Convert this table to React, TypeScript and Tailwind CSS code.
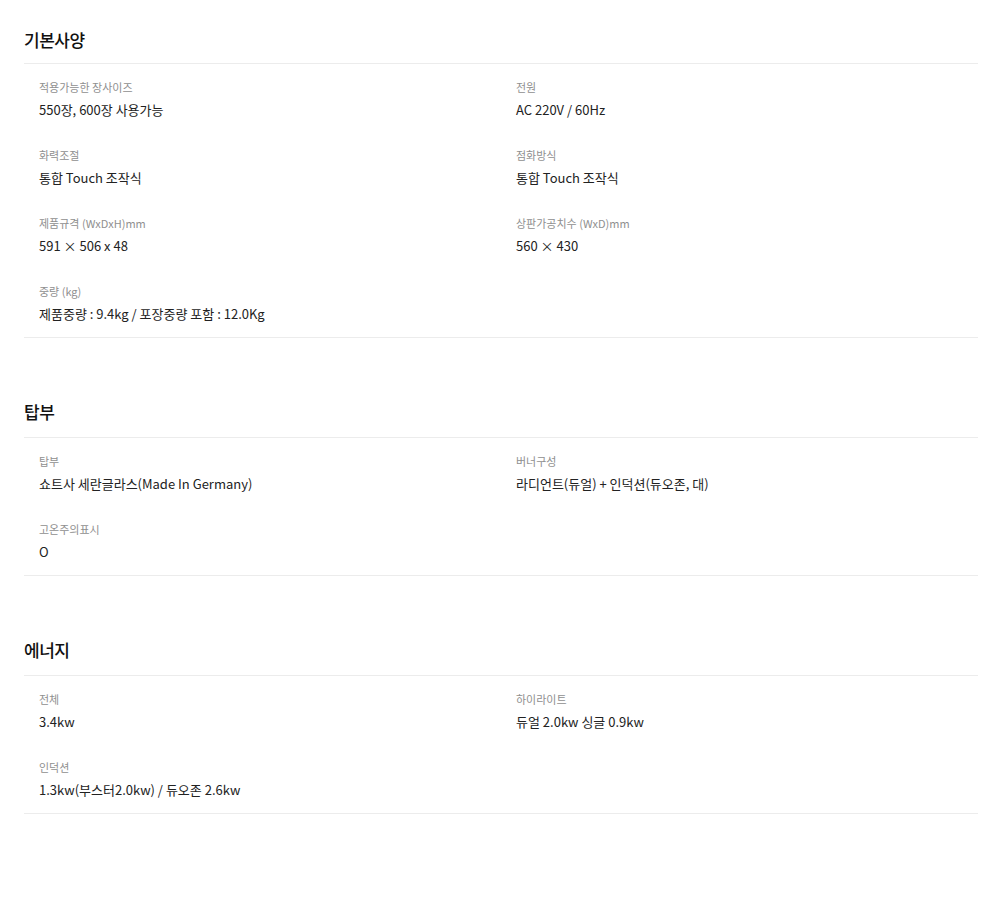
import React from "react";

type Item = { label: string; value: string };
type Section = { title: string; items: Item[] };

const sections: Section[] = [
  {
    title: "기본사양",
    items: [
      { label: "적용가능한 장사이즈", value: "550장, 600장 사용가능" },
      { label: "전원", value: "AC 220V / 60Hz" },
      { label: "화력조절", value: "통합 Touch 조작식" },
      { label: "점화방식", value: "통합 Touch 조작식" },
      { label: "제품규격 (WxDxH)mm", value: "591 × 506 x 48" },
      { label: "상판가공치수 (WxD)mm", value: "560 × 430" },
      { label: "중량 (kg)", value: "제품중량 : 9.4kg / 포장중량 포함 : 12.0Kg" },
    ],
  },
  {
    title: "탑부",
    items: [
      { label: "탑부", value: "쇼트사 세란글라스(Made In Germany)" },
      { label: "버너구성", value: "라디언트(듀얼) + 인덕션(듀오존, 대)" },
      { label: "고온주의표시", value: "O" },
    ],
  },
  {
    title: "에너지",
    items: [
      { label: "전체", value: "3.4kw" },
      { label: "하이라이트", value: "듀얼 2.0kw 싱글 0.9kw" },
      { label: "인덕션", value: "1.3kw(부스터2.0kw) / 듀오존 2.6kw" },
    ],
  },
];

export default function App() {
  return (
    <div
      className="w-[1000px] min-h-[904px] bg-white pl-[24px] pr-[22px] pt-[27px]"
      style={{ fontFamily: '"Noto Sans CJK KR", "Noto Sans", sans-serif' }}
    >
      {sections.map((s, i) => (
        <section key={s.title} className={i === 0 ? "" : "mt-[61px]"}>
          <h2
            className={
              "text-[17px] leading-[26px] font-medium text-[#111] tracking-[-0.5px] border-b border-[#ececec] " +
              (i === 0 ? "pb-[10px]" : "pb-[12px]")
            }
          >
            {s.title}
          </h2>
          <div className="grid grid-cols-[477px_1fr] pl-[15px] pt-[15px] pb-[13px] gap-y-[27px] border-b border-[#ececec]">
            {s.items.map((it) => (
              <div key={it.label}>
                <div className="text-[11px] leading-[16px] text-[#8f8f8f]">{it.label}</div>
                <div className="mt-[5px] text-[13px] leading-[20px] text-[#222]">{it.value}</div>
              </div>
            ))}
          </div>
        </section>
      ))}
    </div>
  );
}
